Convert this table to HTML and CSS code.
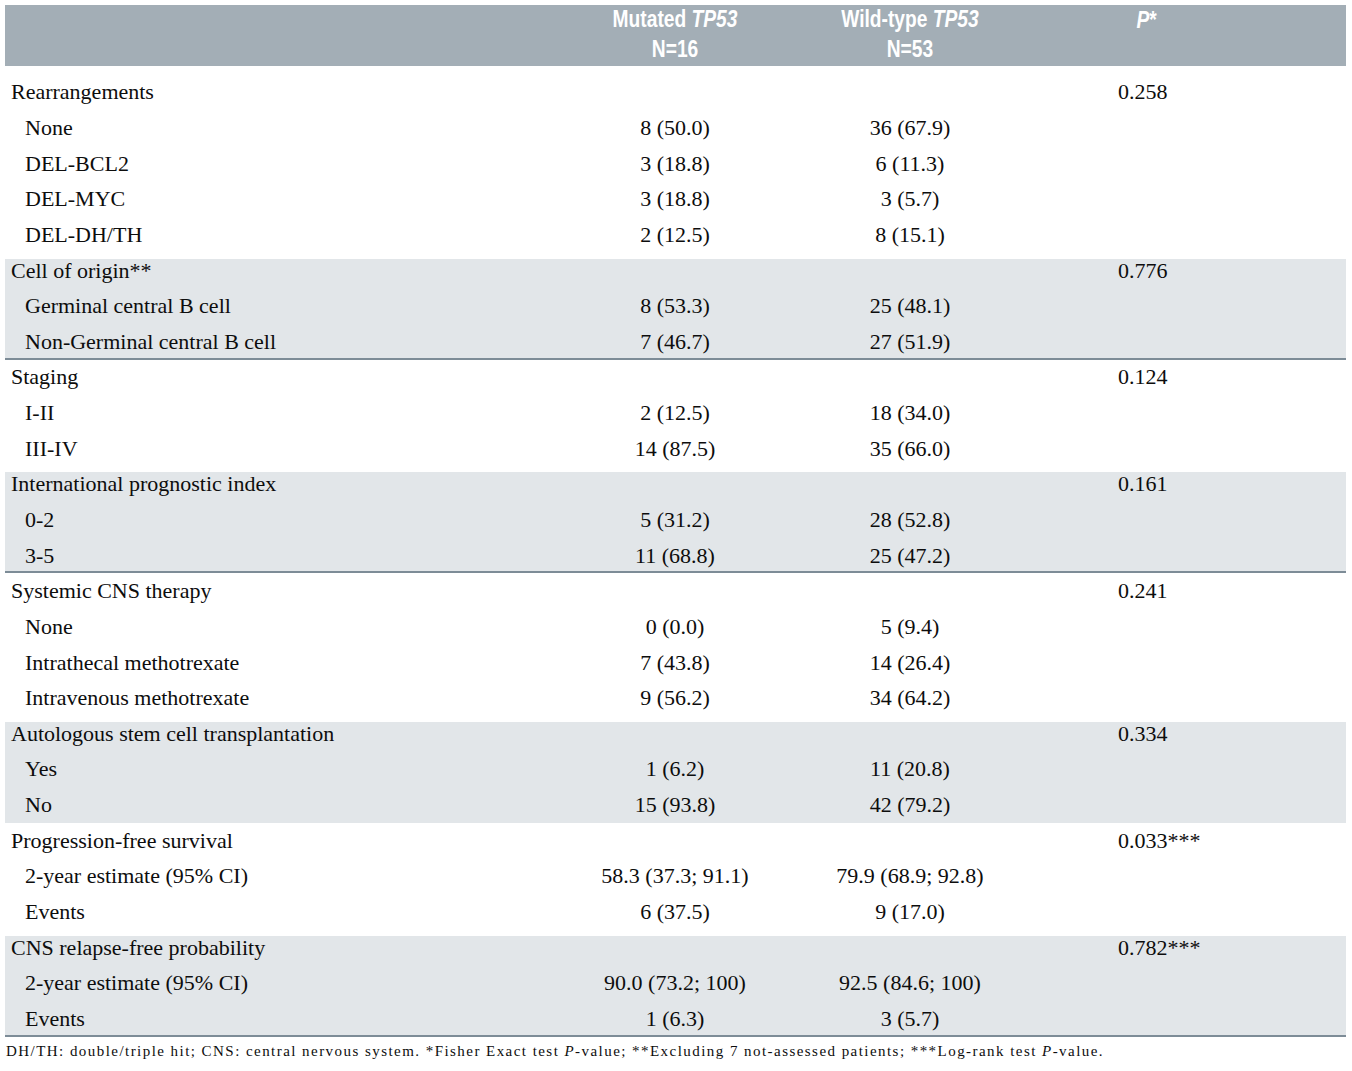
FILE: index.html
```html
<!DOCTYPE html>
<html>
<head>
<meta charset="utf-8">
<link rel="stylesheet" href="styles.css">
</head>
<body>
<div class="table">
  <div class="thead">
    <div class="th"></div>
    <div class="th"><span class="hd">Mutated <i>TP53</i><br>N=16</span></div>
    <div class="th"><span class="hd">Wild-type <i>TP53</i><br>N=53</span></div>
    <div class="th thp"><span class="hd"><i>P</i>*</span></div>
  </div>
  <div class="tbody">
    <div class="group">
      <div class="row"><div class="lab">Rearrangements</div><div class="c"></div><div class="c"></div><div class="p">0.258</div></div>
      <div class="row"><div class="lab sub">None</div><div class="c">8 (50.0)</div><div class="c">36 (67.9)</div><div class="p"></div></div>
      <div class="row"><div class="lab sub">DEL-BCL2</div><div class="c">3 (18.8)</div><div class="c">6 (11.3)</div><div class="p"></div></div>
      <div class="row"><div class="lab sub">DEL-MYC</div><div class="c">3 (18.8)</div><div class="c">3 (5.7)</div><div class="p"></div></div>
      <div class="row"><div class="lab sub">DEL-DH/TH</div><div class="c">2 (12.5)</div><div class="c">8 (15.1)</div><div class="p"></div></div>
    </div>
    <div class="group band rule">
      <div class="row"><div class="lab">Cell of origin**</div><div class="c"></div><div class="c"></div><div class="p">0.776</div></div>
      <div class="row"><div class="lab sub">Germinal central B cell</div><div class="c">8 (53.3)</div><div class="c">25 (48.1)</div><div class="p"></div></div>
      <div class="row"><div class="lab sub">Non-Germinal central B cell</div><div class="c">7 (46.7)</div><div class="c">27 (51.9)</div><div class="p"></div></div>
    </div>
    <div class="group">
      <div class="row"><div class="lab">Staging</div><div class="c"></div><div class="c"></div><div class="p">0.124</div></div>
      <div class="row"><div class="lab sub">I-II</div><div class="c">2 (12.5)</div><div class="c">18 (34.0)</div><div class="p"></div></div>
      <div class="row"><div class="lab sub">III-IV</div><div class="c">14 (87.5)</div><div class="c">35 (66.0)</div><div class="p"></div></div>
    </div>
    <div class="group band rule">
      <div class="row"><div class="lab">International prognostic index</div><div class="c"></div><div class="c"></div><div class="p">0.161</div></div>
      <div class="row"><div class="lab sub">0-2</div><div class="c">5 (31.2)</div><div class="c">28 (52.8)</div><div class="p"></div></div>
      <div class="row"><div class="lab sub">3-5</div><div class="c">11 (68.8)</div><div class="c">25 (47.2)</div><div class="p"></div></div>
    </div>
    <div class="group">
      <div class="row"><div class="lab">Systemic CNS therapy</div><div class="c"></div><div class="c"></div><div class="p">0.241</div></div>
      <div class="row"><div class="lab sub">None</div><div class="c">0 (0.0)</div><div class="c">5 (9.4)</div><div class="p"></div></div>
      <div class="row"><div class="lab sub">Intrathecal methotrexate</div><div class="c">7 (43.8)</div><div class="c">14 (26.4)</div><div class="p"></div></div>
      <div class="row"><div class="lab sub">Intravenous methotrexate</div><div class="c">9 (56.2)</div><div class="c">34 (64.2)</div><div class="p"></div></div>
    </div>
    <div class="group band">
      <div class="row"><div class="lab">Autologous stem cell transplantation</div><div class="c"></div><div class="c"></div><div class="p">0.334</div></div>
      <div class="row"><div class="lab sub">Yes</div><div class="c">1 (6.2)</div><div class="c">11 (20.8)</div><div class="p"></div></div>
      <div class="row"><div class="lab sub">No</div><div class="c">15 (93.8)</div><div class="c">42 (79.2)</div><div class="p"></div></div>
    </div>
    <div class="group">
      <div class="row"><div class="lab">Progression-free survival</div><div class="c"></div><div class="c"></div><div class="p">0.033***</div></div>
      <div class="row"><div class="lab sub">2-year estimate (95% CI)</div><div class="c">58.3 (37.3; 91.1)</div><div class="c">79.9 (68.9; 92.8)</div><div class="p"></div></div>
      <div class="row"><div class="lab sub">Events</div><div class="c">6 (37.5)</div><div class="c">9 (17.0)</div><div class="p"></div></div>
    </div>
    <div class="group band rule">
      <div class="row"><div class="lab">CNS relapse-free probability</div><div class="c"></div><div class="c"></div><div class="p">0.782***</div></div>
      <div class="row"><div class="lab sub">2-year estimate (95% CI)</div><div class="c">90.0 (73.2; 100)</div><div class="c">92.5 (84.6; 100)</div><div class="p"></div></div>
      <div class="row"><div class="lab sub">Events</div><div class="c">1 (6.3)</div><div class="c">3 (5.7)</div><div class="p"></div></div>
    </div>
  </div>
  <p class="note">DH/TH: double/triple hit; CNS: central nervous system. *Fisher Exact test <i>P</i>-value; **Excluding 7 not-assessed patients; ***Log-rank test <i>P</i>-value.</p>
</div>
</body>
</html>
```
FILE: styles.css
```css
html, body {
  margin: 0;
  padding: 0;
  background: #ffffff;
}
body {
  font-family: "Liberation Serif", "Times New Roman", serif;
  color: #0d0d0d;
}
.table {
  width: 1341px;
  margin: 5px 0 0 5px;
}
.thead {
  display: grid;
  grid-template-columns: 555px 230px 240px 316px;
  background: #a3aeb6;
  height: 61px;
  box-sizing: border-box;
}
.th {
  font-family: "Liberation Sans", Arial, sans-serif;
  font-weight: bold;
  font-size: 24px;
  line-height: 29.5px;
  color: #ffffff;
  text-align: center;
}
.hd {
  display: inline-block;
  margin-top: -1px;
  transform: scaleX(0.8);
  transform-origin: center top;
  white-space: nowrap;
}
.th i {
  font-style: italic;
}
.thp {
  text-align: left;
  padding-left: 104px;
}
.tbody {
  margin-top: 8.5px;
}
.band {
  background: linear-gradient(to bottom, transparent 5.5px, #e2e6e9 5.5px);
}
.rule {
  box-shadow: inset 0 -2px 0 #7d8c97;
}
.row {
  display: grid;
  grid-template-columns: 555px 230px 240px 316px;
  height: 35.65px;
  align-items: center;
  font-size: 22px;
  line-height: 24px;
}
.lab {
  padding-left: 6px;
  white-space: nowrap;
}
.lab.sub {
  padding-left: 20px;
}
.c {
  text-align: center;
  white-space: nowrap;
}
.p {
  padding-left: 88px;
  white-space: nowrap;
}
.note {
  margin: 5px 0 0 1px;
  font-size: 15px;
  line-height: 19px;
  letter-spacing: 1.45px;
  white-space: nowrap;
}
```
